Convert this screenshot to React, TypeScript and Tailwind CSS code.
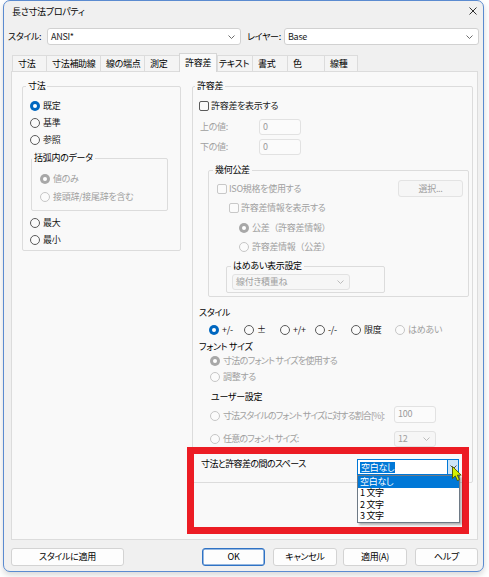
import React from 'react';

// Windows 11 style "長さ寸法プロパティ" dialog, tolerance tab open

type WithClass = { className?: string };

const Chevron = ({ color = '#5c5c5c' }: { color?: string }) => (
  <svg width="7" height="4" viewBox="0 0 7 4" fill="none" className="shrink-0">
    <polyline points="0.5,0.5 3.5,3.5 6.5,0.5" stroke={color} strokeWidth="0.9" />
  </svg>
);

const RadioDot = ({ checked, disabled }: { checked?: boolean; disabled?: boolean }) => {
  if (checked) {
    return (
      <span
        className={`flex h-[10px] w-[10px] shrink-0 items-center justify-center rounded-full ${
          disabled ? 'bg-[#a8a8a8]' : 'bg-[#0067c0]'
        }`}
      >
        <span className="h-[4px] w-[4px] rounded-full bg-white" />
      </span>
    );
  }
  return (
    <span
      className={`h-[10px] w-[10px] shrink-0 rounded-full border bg-[#fbfbfb] ${
        disabled ? 'border-[#c6c6c6]' : 'border-[#5a5a5a]'
      }`}
    />
  );
};

const Radio = ({
  label,
  checked,
  disabled,
  className = '',
  textClass = '',
}: { label: string; checked?: boolean; disabled?: boolean; textClass?: string } & WithClass) => (
  <div className={`flex items-center gap-[3px] ${disabled ? 'text-[#a0a0a0]' : ''} ${className}`}>
    <RadioDot checked={checked} disabled={disabled} />
    <span className={`whitespace-nowrap ${textClass}`}>{label}</span>
  </div>
);

const Check = ({ label, disabled, className = '' }: { label: string; disabled?: boolean } & WithClass) => (
  <div className={`flex items-center gap-[2px] ${disabled ? 'text-[#a0a0a0]' : ''} ${className}`}>
    <span
      className={`h-[10px] w-[10px] shrink-0 rounded-[2px] border bg-[#fbfbfb] ${
        disabled ? 'border-[#c8c8c8]' : 'border-[#5a5a5a]'
      }`}
    />
    <span className="whitespace-nowrap">{label}</span>
  </div>
);

const Group = ({
  title,
  legendClass = '',
  className = '',
  children,
}: { title: string; legendClass?: string; children?: React.ReactNode } & WithClass) => (
  <fieldset className={`rounded-[2px] border border-[#dcdcdc] p-0 ${className}`}>
    <legend className={`px-[2px] leading-[12px] text-black ${legendClass}`}>{title}</legend>
    {children}
  </fieldset>
);

const Combo = ({ value, disabled, className = '' }: { value: string; disabled?: boolean } & WithClass) => (
  <div
    className={`flex items-center justify-between rounded-[3px] border pl-[3px] pr-[5px] ${
      disabled ? 'border-[#e2e2e2] bg-[#f6f6f6] text-[#a0a0a0]' : 'border-[#d1d1d1] bg-white'
    } ${className}`}
  >
    <span className="whitespace-nowrap">{value}</span>
    <Chevron color={disabled ? '#b5b5b5' : '#5c5c5c'} />
  </div>
);

const TextBox = ({ value, className = '' }: { value: string } & WithClass) => (
  <div
    className={`flex items-center rounded-[3px] border border-[#e2e2e2] bg-[#fbfbfb] pl-[3px] text-[#9a9a9a] ${className}`}
  >
    {value}
  </div>
);

const Button = ({ label, primary, className = '' }: { label: string; primary?: boolean } & WithClass) => (
  <button
    className={`flex h-[18px] items-center justify-center rounded-[3px] border bg-[#fdfdfd] text-black ${
      primary ? 'border-[#2f72c4] shadow-[inset_0_0_0_0.5px_#2f72c4]' : 'border-[#d3d3d3]'
    } ${className}`}
  >
    {label}
  </button>
);

const tabs = [
  { label: '寸法', w: 'w-[34px]' },
  { label: '寸法補助線', w: 'w-[54px]' },
  { label: '線の端点', w: 'w-[44px]' },
  { label: '測定', w: 'w-[35px]' },
  { label: '許容差', w: 'w-[38px]', active: true },
  { label: 'テキスト', w: 'w-[35px]' },
  { label: '書式', w: 'w-[35px]' },
  { label: '色', w: 'w-[37px]' },
  { label: '線種', w: 'w-[34px]' },
];

const styleOptions = [
  { label: '+/-', w: 'w-[35px]', checked: true },
  { label: '±', w: 'w-[36px]' },
  { label: '+/+', w: 'w-[35px]' },
  { label: '-/-', w: 'w-[36px]' },
  { label: '限度', w: 'w-[44px]' },
  { label: 'はめあい', w: 'w-auto', disabled: true },
];

const spaceOptions = ['空白なし', '1 文字', '2 文字', '3 文字'];

export default function App() {
  return (
    <div className="h-[577px] w-[489px] overflow-hidden bg-white font-['Noto_Sans_CJK_JP','Noto_Sans',sans-serif] text-[9px] leading-[12px] tracking-[-0.3px] text-[#1a1a1a] [font-feature-settings:'palt']">
      <div className="relative ml-[3px] flex h-[572px] w-[481px] flex-col rounded-[7px] border border-[#5b8bd0] bg-[#f0f0f0] shadow-[0_3px_6px_rgba(0,0,0,0.16)]">
        {/* title bar */}
        <div className="flex h-[22px] items-center justify-between pl-[8px] pr-[6px]">
          <span className="text-black">長さ寸法プロパティ</span>
          <svg width="8" height="8" viewBox="0 0 8 8" className="mt-[-2px]">
            <path d="M0.5 0.5L7.5 7.5M7.5 0.5L0.5 7.5" stroke="#1a1a1a" strokeWidth="0.9" />
          </svg>
        </div>

        {/* style / layer */}
        <div className="mt-[5px] flex h-[17px] items-center pl-[4px]">
          <span className="w-[39px] text-black">スタイル:</span>
          <Combo value="ANSI*" className="h-[17px] w-[194px]" />
          <span className="ml-[6px] w-[37px] text-black">レイヤー:</span>
          <Combo value="Base" className="h-[17px] w-[195px]" />
        </div>

        {/* tabs */}
        <div className="mt-[8px] flex h-[18px] items-start pl-[8px]">
          {tabs.map((t, i) =>
            t.active ? (
              <div
                key={t.label}
                className={`relative z-10 flex h-[19px] items-center border-x border-t border-[#d6d6d6] bg-[#f9f9f9] pl-[5px] text-black ${t.w}`}
              >
                {t.label}
              </div>
            ) : (
              <div
                key={t.label}
                className={`mt-[2px] flex h-[16px] items-center border-t border-l border-[#dcdcdc] bg-[#f4f4f4] text-black ${
                  t.label === 'テキスト' ? 'pl-[1px]' : 'pl-[5px]'
                } ${i === tabs.length - 1 ? 'border-r' : ''} ${t.w}`}
              >
                {t.label}
              </div>
            ),
          )}
        </div>

        {/* tab page */}
        <div className="ml-[7px] h-[469px] w-[467px] border border-[#dcdcdc] bg-[#f9f9f9]">
          <div className="flex items-start gap-[11px] pl-[10px] pt-[8px]">
            {/* 寸法 */}
            <Group title="寸法" legendClass="ml-[3px]" className="w-[159px] pb-[2px]">
              <div className="pl-[7px] pt-[5px]">
                <Radio label="既定" checked className="h-[17px]" />
                <Radio label="基準" className="h-[17px]" />
                <Radio label="参照" className="h-[17px]" />
              </div>
              <Group title="括弧内のデータ" className="ml-[8px] mt-[4px] w-[137px] pb-[4px]">
                <div className="pl-[8px] pt-[6px]">
                  <Radio label="値のみ" checked disabled className="h-[18px]" />
                  <Radio label="接頭辞/接尾辞を含む" disabled className="h-[18px]" />
                </div>
              </Group>
              <div className="mt-[3px] pl-[7px]">
                <Radio label="最大" className="h-[17px]" />
                <Radio label="最小" className="h-[17px]" />
              </div>
            </Group>

            {/* 許容差 */}
            <Group title="許容差" legendClass="ml-[2px]" className="w-[281px] pb-[7px]">
              <Check label="許容差を表示する" className="mt-[6px] h-[16px] pl-[6px]" />
              <div className="mt-[4.5px] flex h-[16px] items-center pl-[7px]">
                <span className="w-[59px] text-[#a0a0a0]">上の値:</span>
                <TextBox value="0" className="h-[16px] w-[42px]" />
              </div>
              <div className="mt-[4.5px] flex h-[16px] items-center pl-[7px]">
                <span className="w-[59px] text-[#a0a0a0]">下の値:</span>
                <TextBox value="0" className="h-[16px] w-[42px]" />
              </div>

              <Group title="幾何公差" legendClass="ml-[4px]" className="ml-[15px] mt-[9px] w-[261px] pb-[3px]">
                <div className="mt-[4px] flex h-[17px] items-center pl-[8px] pr-[5px]">
                  <Check label="ISO規格を使用する" disabled />
                  <div className="ml-auto flex h-[17px] w-[65px] items-center justify-center rounded-[3px] border border-[#e3e3e3] bg-[#f6f6f6] text-[#a0a0a0]">
                    選択...
                  </div>
                </div>
                <Check label="許容差情報を表示する" disabled className="mt-[3px] h-[16px] pl-[20px]" />
                <Radio
                  label="公差（許容差情報）"
                  checked
                  disabled
                  textClass="[font-feature-settings:normal]"
                  className="mt-[4px] h-[16px] pl-[30px]"
                />
                <Radio
                  label="許容差情報（公差）"
                  disabled
                  textClass="[font-feature-settings:normal]"
                  className="mt-[3px] h-[16px] pl-[30px]"
                />
                <Group title="はめあい表示設定" legendClass="ml-[4px]" className="ml-[17px] mt-[5px] w-[159px] pb-[2px]">
                  <Combo value="線付き積重ね" disabled className="ml-[5px] mt-[2px] h-[16px] w-[118px]" />
                </Group>
              </Group>

              <div className="mt-[9.5px] h-[12px] pl-[6px] text-black">スタイル</div>
              <div className="mt-[3px] flex h-[16px] items-center pl-[16px]">
                {styleOptions.map((o) => (
                  <Radio key={o.label} label={o.label} checked={o.checked} disabled={o.disabled} className={o.w} />
                ))}
              </div>
              <div className="mt-[3px] h-[12px] pl-[6px] text-black">フォント サイズ</div>
              <Radio
                label="寸法のフォント サイズを使用する"
                checked
                disabled
                textClass="tracking-[-0.7px]"
                className="mt-[1.5px] h-[14px] pl-[17px]"
              />
              <Radio label="調整する" disabled className="mt-[1.5px] h-[14px] pl-[17px]" />
              <div className="mt-[7px] h-[12px] pl-[18px] text-black">ユーザー設定</div>
              <div className="mt-[3px] flex h-[17px] items-center pl-[17px]">
                <Radio
                  label="寸法スタイルのフォント サイズに対する割合[%]:"
                  disabled
                  textClass="tracking-[-0.9px]"
                  className="relative top-[2px] w-[184px]"
                />
                <TextBox value="100" className="h-[17px] w-[42px]" />
              </div>
              <div className="mt-[8px] flex h-[16px] items-center pl-[17px]">
                <Radio label="任意のフォント サイズ:" disabled textClass="tracking-[-0.8px]" className="w-[184px]" />
                <Combo value="12" disabled className="h-[16px] w-[42px]" />
              </div>

              <div className="mt-[12.5px] flex h-[16px] items-start pl-[8px]">
                <span className="-mt-[1px] w-[156px] tracking-[-0.6px] text-black">寸法と許容差の間のスペース</span>
                <div className="relative h-[16px] w-[102px]">
                  <div className="flex h-[16px] w-[102px] items-center border border-[#0078d7] bg-white pl-[2px]">
                    <span className="bg-[#0078d7] px-[1px] leading-[11px] text-white">空白なし</span>
                    <span className="ml-auto flex h-full w-[11px] items-center justify-center border-l border-[#0078d7] bg-[#cce4f7]">
                      <Chevron color="#3c3c3c" />
                    </span>
                  </div>
                  {/* open dropdown list */}
                  <div className="absolute left-0 top-[16px] z-30 w-[103px] border border-[#6e7a86] bg-white shadow-[2px_2px_2px_rgba(0,0,0,0.28)]">
                    {spaceOptions.map((s, i) => (
                      <div
                        key={s}
                        className={`flex h-[11.5px] items-center pl-[2px] ${
                          i === 0 ? 'bg-[#0078d7] text-white' : 'text-black'
                        }`}
                      >
                        {s}
                      </div>
                    ))}
                  </div>
                  {/* mouse cursor */}
                  <svg
                    width="11"
                    height="16"
                    viewBox="0 0 11 16"
                    className="absolute left-[95px] top-[6.5px] z-40"
                  >
                    <path
                      d="M0.5 0.5 L0.5 12.5 L3.3 9.9 L5.3 14.6 L7.4 13.7 L5.4 9.1 L9.2 9.1 Z"
                      fill="#d4ef00"
                      stroke="#4a5200"
                      strokeWidth="0.9"
                      strokeLinejoin="round"
                    />
                  </svg>
                </div>
              </div>
            </Group>
          </div>
        </div>

        {/* bottom buttons */}
        <div className="mt-[8px] flex h-[18px] pl-[7px]">
          <Button label="スタイルに適用" className="w-[113px]" />
          <Button label="OK" primary className="ml-[78px] w-[63px]" />
          <Button label="キャンセル" className="ml-[8px] w-[64px]" />
          <Button label="適用(A)" className="ml-[6px] w-[64px]" />
          <Button label="ヘルプ" className="ml-[8px] w-[63px]" />
        </div>

        {/* red highlight annotation */}
        <div className="pointer-events-none absolute left-[183px] top-[446px] z-20 h-[87px] w-[282px] border-[7px] border-[#ec1c24]" />
      </div>
    </div>
  );
}
